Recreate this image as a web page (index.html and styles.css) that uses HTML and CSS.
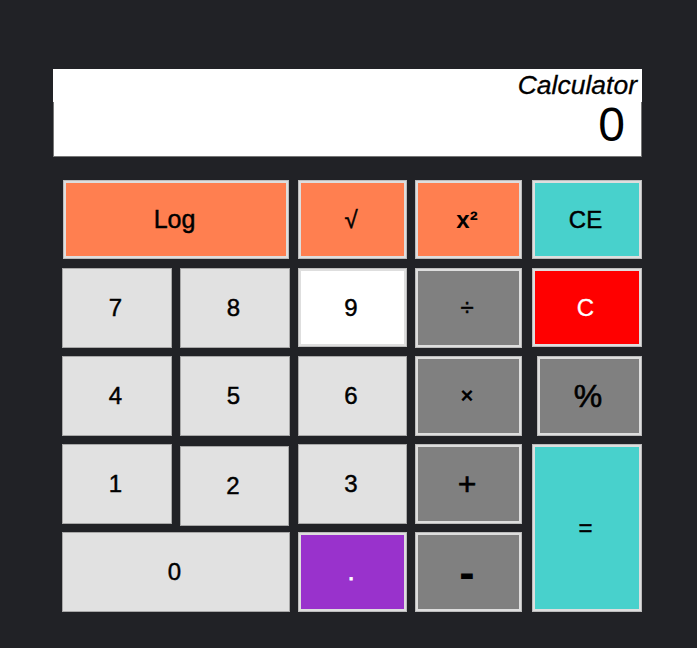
FILE: index.html
```html
<!DOCTYPE html>
<html lang="en">
<head>
<meta charset="utf-8">
<title>Calculator</title>
<link rel="stylesheet" href="styles.css">
</head>
<body>
<main class="calc">
  <section class="display">
    <div class="title">Calculator</div>
    <div class="screen">0</div>
  </section>
  <section class="keys">
    <button class="key fn span2 log">Log</button>
    <button class="key fn">√</button>
    <button class="key fn op bold">x²</button>
    <button class="key teal">CE</button>

    <button class="key num">7</button>
    <button class="key num">8</button>
    <button class="key white">9</button>
    <button class="key gray op">÷</button>
    <button class="key red">C</button>

    <button class="key num">4</button>
    <button class="key num">5</button>
    <button class="key num">6</button>
    <button class="key gray op times">×</button>
    <button class="key gray pct">%</button>

    <button class="key num">1</button>
    <button class="key num two">2</button>
    <button class="key num">3</button>
    <button class="key gray op big">+</button>
    <button class="key teal equals">=</button>

    <button class="key num span2">0</button>
    <button class="key purple">.</button>
    <button class="key gray op minus">-</button>
  </section>
</main>
</body>
</html>
```

FILE: styles.css
```css
html, body {
  margin: 0;
  padding: 0;
  background: #212226;
}

body {
  font-family: "Liberation Sans", Arial, sans-serif;
  width: 697px;
  height: 648px;
}

.calc {
  padding: 69px 0 0 53px;
  display: flex;
  flex-direction: column;
}

.display {
  width: 589px;
  display: flex;
  flex-direction: column;
}

.title {
  background: #ffffff;
  height: 33px;
  line-height: 33px;
  text-align: right;
  font-style: italic;
  font-size: 26.5px;
  padding-right: 5px;
  color: #000;
  -webkit-text-stroke: 0.3px #000;
}

.screen {
  background: #ffffff;
  height: 54px;
  border: 1px solid #767676;
  border-top: none;
  text-align: right;
  font-size: 48px;
  line-height: 46px;
  padding-right: 16px;
  color: #000;
}

.keys {
  margin: 23px 0 0 9px;
  display: grid;
  grid-template-columns: 110px 110px 109px 109px 110px;
  grid-auto-rows: 80px;
  column-gap: 8px;
  row-gap: 8px;
}

.key {
  box-sizing: border-box;
  margin: 0;
  padding: 0 3px 0 0;
  font-family: "Liberation Sans", Arial, sans-serif;
  font-size: 24px;
  color: #000;
  -webkit-text-stroke: 0.45px #000;
  border: 1px solid #bcbcbc;
  box-shadow: inset 0 0 0 2px #dedede;
  background: #e0e0e0;
  width: 100%;
  height: 100%;
}

.span2 {
  grid-column: span 2;
}

.log {
  width: auto;
  margin: 0 1px;
  height: 79px;
  font-size: 25px;
}

.fn {
  background: #ff7f50;
  height: 79px;
}

.teal {
  background: #48d1cc;
  height: 79px;
}

.num {
  background: #e1e1e1;
  border: 1px solid #a8a8a8;
  box-shadow: none;
}

.white {
  background: #ffffff;
  height: 79px;
}

.gray {
  background: #808080;
}

.red {
  background: #ff0000;
  color: #ffffff;
  -webkit-text-stroke: 0.3px #ffffff;
  height: 79px;
}

.purple {
  background: #9932cc;
  color: #ffffff;
  -webkit-text-stroke: 0.8px #ffffff;
}

.op {
  width: 107px;
}

.bold {
  font-weight: bold;
  -webkit-text-stroke: 0;
}

.times {
  font-size: 22px;
  font-weight: bold;
  -webkit-text-stroke: 0;
}

.big {
  font-size: 32px;
  -webkit-text-stroke: 0.6px #000;
}

.minus {
  font-size: 46px;
  font-weight: bold;
  -webkit-text-stroke: 0;
}

.pct {
  margin-left: 5px;
  width: 105px;
  font-size: 32px;
  -webkit-text-stroke: 0.6px #000;
}

.two {
  margin-top: 2px;
  width: 109px;
}

.equals {
  grid-row: span 2;
  height: 100%;
}
```
